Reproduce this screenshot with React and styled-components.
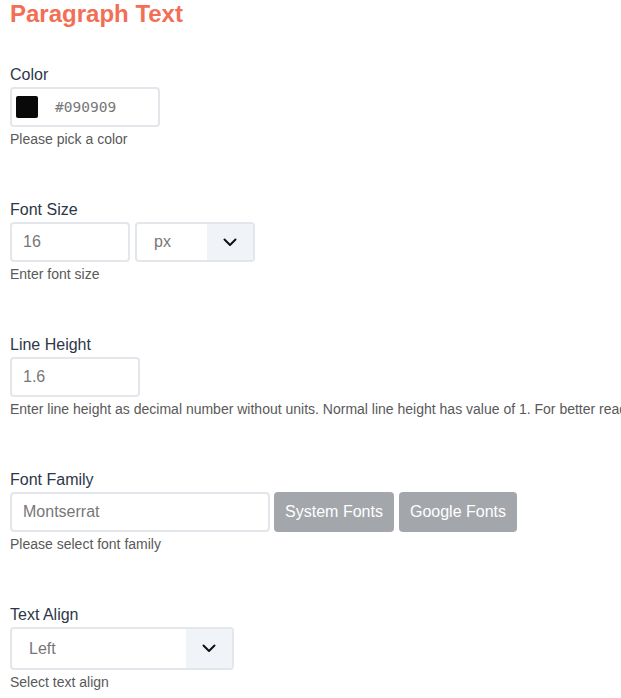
import React from "react";
import styled, { createGlobalStyle } from "styled-components";

const GlobalStyle = createGlobalStyle`
  body {
    margin: 0;
    background: #fff;
    font-family: "Liberation Sans", Arial, sans-serif;
  }
`;

function Chevron() {
  return (
    <svg width="14" height="9" viewBox="0 0 14 9" fill="none">
      <polyline points="1.5,1.5 7,7 12.5,1.5" stroke="#111" strokeWidth="2" strokeLinecap="round" strokeLinejoin="round" />
    </svg>
  );
}

function Select({ value, width, height }) {
  return (
    <SelectBox $width={width} $height={height}>
      <SelectValue>{value}</SelectValue>
      <ArrowZone>
        <Chevron />
      </ArrowZone>
    </SelectBox>
  );
}

function App() {
  return (
    <Page>
      <GlobalStyle />
      <Title>Paragraph Text</Title>

      <Section>
        <Label>Color</Label>
        <ColorInput>
          <Swatch $color="#090909" />
          <HexText>#090909</HexText>
        </ColorInput>
        <Help>Please pick a color</Help>
      </Section>

      <Section>
        <Label>Font Size</Label>
        <Row>
          <TextInput $width={120} readOnly value="16" />
          <Select value="px" width={120} />
        </Row>
        <Help>Enter font size</Help>
      </Section>

      <Section>
        <Label>Line Height</Label>
        <TextInput $width={130} readOnly value="1.6" />
        <Help>
          Enter line height as decimal number without units. Normal line height has value of 1. For better readability use 1.5 or more.
        </Help>
      </Section>

      <Section>
        <Label>Font Family</Label>
        <Row>
          <TextInput $width={260} readOnly value="Montserrat" />
          <GrayButton $width={120} $pull>System Fonts</GrayButton>
          <GrayButton $width={118}>Google Fonts</GrayButton>
        </Row>
        <Help>Please select font family</Help>
      </Section>

      <Section>
        <Label>Text Align</Label>
        <Select value="Left" width={224} height={43} />
        <Help>Select text align</Help>
      </Section>
    </Page>
  );
}

export default App;

const Page = styled.div`
  padding: 0 0 0 10px;
  overflow: hidden;
  height: 698px;
  box-sizing: border-box;
`;

const Title = styled.h2`
  margin: 0 0 37px;
  font-size: 24px;
  line-height: 28px;
  font-weight: 700;
  color: #f26f55;
`;

const Section = styled.div`
  display: flex;
  flex-direction: column;
  align-items: flex-start;
  margin-bottom: 51px;
`;

const Label = styled.label`
  font-size: 16px;
  line-height: 20px;
  color: #2d3748;
  margin-bottom: 2px;
`;

const Row = styled.div`
  display: flex;
  gap: 5px;
`;

const TextInput = styled.input`
  box-sizing: border-box;
  width: ${(p) => p.$width}px;
  height: 40px;
  border: 2px solid #e3e6ea;
  border-radius: 4px;
  padding: 0 11px;
  font-family: "Liberation Sans", Arial, sans-serif;
  font-size: 16px;
  color: #777;
  background: #fff;
  outline: none;
`;

const ColorInput = styled.div`
  box-sizing: border-box;
  width: 150px;
  height: 40px;
  border: 2px solid #e3e6ea;
  border-radius: 4px;
  display: flex;
  align-items: center;
  padding-left: 4px;
  gap: 17px;
`;

const Swatch = styled.span`
  width: 22px;
  height: 22px;
  border-radius: 2px;
  background: ${(p) => p.$color};
`;

const HexText = styled.span`
  font-family: "DejaVu Sans Mono", "Liberation Mono", monospace;
  font-size: 14.5px;
  color: #777;
`;

const SelectBox = styled.div`
  box-sizing: border-box;
  width: ${(p) => p.$width}px;
  height: ${(p) => p.$height || 40}px;
  border: 2px solid #e3e6ea;
  border-radius: 4px;
  display: flex;
  overflow: hidden;
  background: #fff;
`;

const SelectValue = styled.span`
  flex: 1;
  display: flex;
  align-items: center;
  padding-left: 17px;
  font-size: 16px;
  color: #777;
`;

const ArrowZone = styled.span`
  width: 46px;
  display: flex;
  align-items: center;
  justify-content: center;
  background: #f0f4f9;
`;

const GrayButton = styled.button`
  box-sizing: border-box;
  width: ${(p) => p.$width}px;
  height: 40px;
  border: none;
  border-radius: 4px;
  background: #a3a7ab;
  color: #fff;
  font-family: "Liberation Sans", Arial, sans-serif;
  font-size: 16px;
  padding: 0;
  margin-left: ${(p) => (p.$pull ? "-1px" : "0")};
  cursor: pointer;
`;

const Help = styled.div`
  margin-top: 2px;
  font-size: 14px;
  line-height: 20px;
  color: #595959;
  white-space: nowrap;
`;
